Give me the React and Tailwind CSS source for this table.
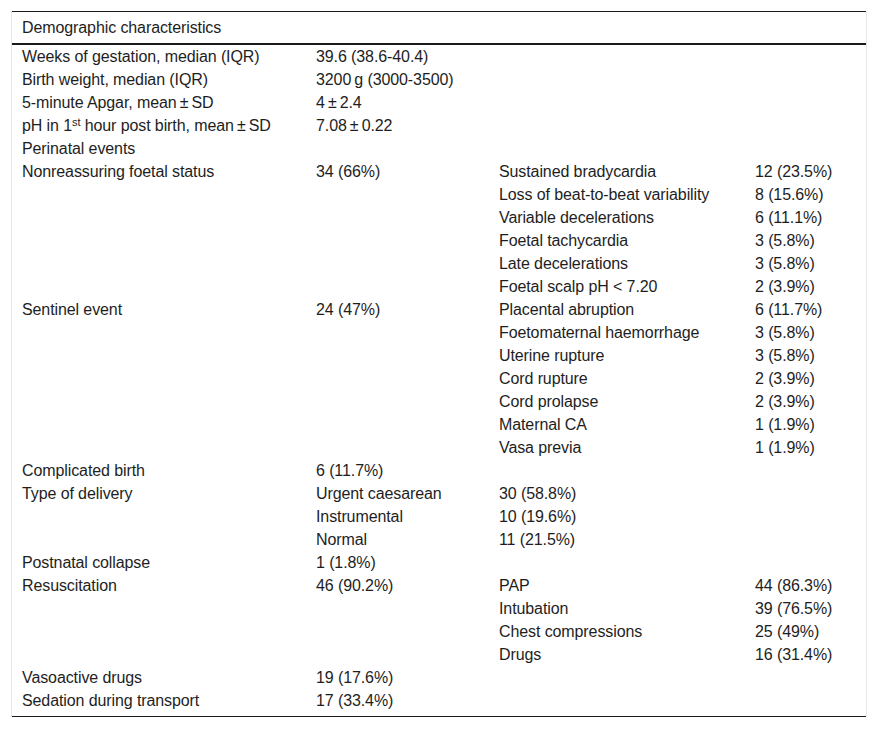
import React from "react";

const T = "\u2009";
const rows = [
  ["Weeks of gestation, median (IQR)", "39.6 (38.6-40.4)", "", ""],
  ["Birth weight, median (IQR)", `3200${T}g (3000-3500)`, "", ""],
  [`5-minute Apgar, mean${T}±${T}SD`, `4${T}±${T}2.4`, "", ""],
  ["__ph__", `7.08${T}±${T}0.22`, "", ""],
  ["Perinatal events", "", "", ""],
  ["Nonreassuring foetal status", "34 (66%)", "Sustained bradycardia", "12 (23.5%)"],
  ["", "", "Loss of beat-to-beat variability", "8 (15.6%)"],
  ["", "", "Variable decelerations", "6 (11.1%)"],
  ["", "", "Foetal tachycardia", "3 (5.8%)"],
  ["", "", "Late decelerations", "3 (5.8%)"],
  ["", "", "Foetal scalp pH < 7.20", "2 (3.9%)"],
  ["Sentinel event", "24 (47%)", "Placental abruption", "6 (11.7%)"],
  ["", "", "Foetomaternal haemorrhage", "3 (5.8%)"],
  ["", "", "Uterine rupture", "3 (5.8%)"],
  ["", "", "Cord rupture", "2 (3.9%)"],
  ["", "", "Cord prolapse", "2 (3.9%)"],
  ["", "", "Maternal CA", "1 (1.9%)"],
  ["", "", "Vasa previa", "1 (1.9%)"],
  ["Complicated birth", "6 (11.7%)", "", ""],
  ["Type of delivery", "Urgent caesarean", "30 (58.8%)", ""],
  ["", "Instrumental", "10 (19.6%)", ""],
  ["", "Normal", "11 (21.5%)", ""],
  ["Postnatal collapse", "1 (1.8%)", "", ""],
  ["Resuscitation", "46 (90.2%)", "PAP", "44 (86.3%)"],
  ["", "", "Intubation", "39 (76.5%)"],
  ["", "", "Chest compressions", "25 (49%)"],
  ["", "", "Drugs", "16 (31.4%)"],
  ["Vasoactive drugs", "19 (17.6%)", "", ""],
  ["Sedation during transport", "17 (33.4%)", "", ""],
];

function Cell({ children }) {
  if (children === "__ph__") {
    return (
      <div className="pl-[10px] h-[23px] leading-[23px] whitespace-nowrap">
        pH in 1<sup className="text-[11px]">st</sup> hour post birth, mean{T}±{T}SD
      </div>
    );
  }
  return (
    <div className="pl-[10px] h-[23px] leading-[23px] whitespace-nowrap">{children}</div>
  );
}

export default function App() {
  return (
    <div
      className="bg-white w-[877px] h-[729px] pt-[11px] pl-[11px] pr-[10px] text-[16px] tracking-[-0.1px] text-[#1e1e1e]"
      style={{ fontFamily: '"Liberation Sans", Arial, sans-serif' }}
    >
      <div className="border-l border-r border-l-[#e6e6e6] border-r-[#e6e6e6]">
        <div className="border-t border-t-[#1a1a1a] border-b-2 border-b-[#1a1a1a] h-[34px] pt-[4px]">
          <div className="pl-[10px] h-[23px] leading-[23px]">Demographic characteristics</div>
        </div>
        <div className="grid grid-cols-[294px_183px_256px_1fr] pb-[4px] border-b border-b-[#1a1a1a]">
          {rows.map((r, i) => (
            <React.Fragment key={i}>
              <Cell>{r[0]}</Cell>
              <Cell>{r[1]}</Cell>
              <Cell>{r[2]}</Cell>
              <Cell>{r[3]}</Cell>
            </React.Fragment>
          ))}
        </div>
      </div>
    </div>
  );
}
